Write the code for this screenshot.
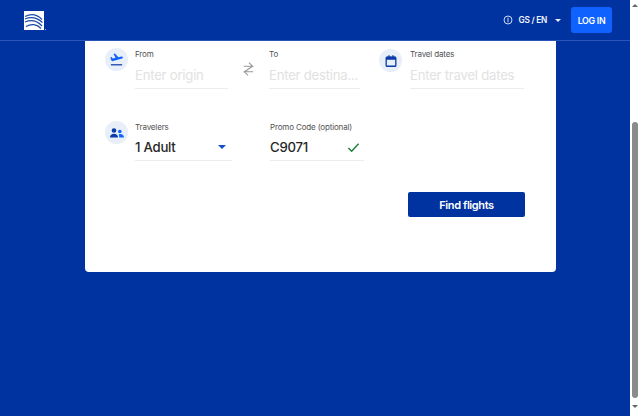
<div class="page">
  <div class="main">
    <header class="top">
      <svg class="logo" viewBox="0 0 20 19" width="20" height="19" aria-hidden="true">
        <rect width="20" height="19" fill="#fff" />
        <path d="M1 5.500C7 2.500 13 3.500 18 8.500M1 8C7 5.500 13 6.500 18.500 11.500M1 11C7 8.500 13 9.500 18 15M2 15.500C7 12.500 13 13 17 17.500" fill="none" stroke="#1a4aa8" stroke-width="1.200" />
      </svg>
      <span class="tm"></span>
      <div class="spacer"></div>
      <svg class="coin" viewBox="0 0 12 12" width="10" height="10" aria-hidden="true">
        <circle cx="6" cy="6" r="4.800" fill="none" stroke="#dfe7f8" stroke-width="1.100" />
        <path d="M6 3.200v5.600" stroke="#dfe7f8" stroke-width="1.100" />
      </svg>
      <span class="locale">GS / EN</span>
      <span class="caret white"></span>
      <button class="login">LOG IN</button>
    </header>
    <div class="content">
      <section class="card">
        <div class="row first">
          <div class="badge">
            <svg viewBox="0 0 16 16" width="15" height="15" aria-hidden="true">
              <path d="M2 13h12v1.300H2z" fill="#0a3ba8" />
              <path d="M2.200 8.500 1.500 5.600l1.200-.3 1.300 1.600 3-.8L4.800 2l1.500-.4 3.700 4.100 3.300-.9c.7-.2 1.300.2 1.500.8.100.6-.2 1.200-.8 1.400L3.400 9.800z" fill="#0f62fe" />
            </svg>
          </div>
          <div class="field from">
            <span class="label">From</span>
            <span class="value placeholder">Enter origin</span>
          </div>
          <div class="swap">
            <svg viewBox="0 0 12 16" width="11" height="16" aria-hidden="true">
              <path d="M1 5H10.500L6.500 1M10.500 5 1.500 11H11M1.500 11l4 4" fill="none" stroke="#969696" stroke-width="1.100" />
            </svg>
          </div>
          <div class="field to">
            <span class="label">To</span>
            <span class="value placeholder">Enter destina...</span>
          </div>
          <div class="badge dates">
            <svg viewBox="0 0 16 16" width="14" height="14" aria-hidden="true">
              <rect x="2.500" y="3.500" width="11" height="10.500" rx="1" fill="none" stroke="#0a3ba8" stroke-width="1.500" />
              <path d="M2.500 3h11v3.500h-11zM5 1.500h1.500V4H5zM9.500 1.500H11V4H9.500z" fill="#0a3ba8" />
            </svg>
          </div>
          <div class="field when">
            <span class="label">Travel dates</span>
            <span class="value placeholder">Enter travel dates</span>
          </div>
        </div>
        <div class="row second">
          <div class="badge">
            <svg viewBox="0 0 16 16" width="16" height="16" aria-hidden="true">
              <circle cx="5" cy="5.500" r="2.300" fill="#0a3ba8" />
              <circle cx="10.800" cy="6.500" r="1.800" fill="#0f62fe" />
              <path d="M1 12.500c0-2.500 1.800-3.700 4-3.700s4 1.200 4 3.700z" fill="#0a3ba8" />
              <path d="M9.800 9.200c2.700-.6 5.200.6 5.200 3.300h-4.800c0-1.300 0-2.300-.4-3.300z" fill="#0f62fe" />
            </svg>
          </div>
          <div class="field travelers">
            <span class="label">Travelers</span>
            <span class="value filled">1 Adult<span class="caret blue"></span></span>
          </div>
          <div class="field promo">
            <span class="label">Promo Code (optional)</span>
            <span class="value filled">C9071
              <svg viewBox="0 0 14 14" width="13" height="13" aria-hidden="true">
                <path d="M1.500 7.500 5 11l7.500-8" fill="none" stroke="#1a7f37" stroke-width="1.500" />
              </svg>
            </span>
          </div>
        </div>
        <div class="actions">
          <button class="find">Find flights</button>
        </div>
      </section>
    </div>
  </div>
  <aside class="scrollbar">
    <span class="arrow up"></span>
    <span class="thumb"></span>
    <span class="arrow down"></span>
  </aside>
</div>

<style>
  :global(body) { margin: 0; background: #0033a0; }
  .page { display: flex; width: 640px; height: 416px; overflow: hidden; font-family: Inter, "Liberation Sans", sans-serif; }
  .main { width: 630px; background: #0033a0; flex: none; }
  .top { height: 40px; display: flex; align-items: center; padding: 0 18px 0 24px; border-bottom: 1px solid #2a55b8; }
  .logo { margin-top: 1px; }
  .tm { width: 1px; height: 1px; background: #9db4e6; align-self: center; margin: 19px 0 0 1px; }
  .spacer { flex: 1; }
  .coin { margin-right: 5px; }
  .locale { color: #f2f5fc; font-size: 8.300px; font-weight: 600; letter-spacing: -0.25px; white-space: nowrap; }
  .caret { width: 0; height: 0; border-left: 3px solid transparent; border-right: 3px solid transparent; border-top: 3px solid #fff; }
  .caret.white { margin: 0 10px 0 8px; border-top-color: #e8eefb; }
  .login { width: 41px; height: 26px; padding: 0; border: 0; border-radius: 3px; background: #0f62fe; color: #fff; font: 600 8.800px Inter, sans-serif; letter-spacing: -0.3px; }
  .content { padding-left: 85px; }
  .card { width: 471px; height: 231px; box-sizing: border-box; background: #fff; border-radius: 0 0 4px 4px; padding: 6px 31px 0 20px; }
  .row { display: flex; align-items: flex-start; }
  .row.second { margin-top: 31px; }
  .badge { width: 23px; height: 23px; border-radius: 50%; background: #e8eff8; display: flex; align-items: center; justify-content: center; flex: none; margin-top: 1px; }
  .field { display: flex; flex-direction: column; }
  .label { font-size: 8px; letter-spacing: -0.15px; line-height: 14px; color: #525252; white-space: nowrap; }
  .value { height: 28px; display: flex; align-items: center; justify-content: space-between; border-bottom: 1px solid #ececec; box-sizing: border-box; font-size: 13.200px; letter-spacing: -0.25px; white-space: nowrap; }
  .placeholder { color: #e2e2e2; }
  .filled { color: #262626; font-weight: 500; height: 27px; }
  .from { margin-left: 7px; width: 93px; }
  .swap { width: 41px; display: flex; justify-content: center; padding-top: 14px; }
  .to { width: 91px; }
  .dates { margin: 2px 0 0 19px; }
  .when { margin-left: 8px; width: 114px; }
  .travelers { margin-left: 7px; width: 97px; }
  .travelers .value { padding-right: 6px; }
  .caret.blue { border-left-width: 4px; border-right-width: 4px; border-top: 4px solid #0f4fd0; }
  .promo { margin-left: 38px; width: 94px; }
  .promo .value { padding-right: 4px; }
  .actions { display: flex; justify-content: flex-end; margin-top: 31px; }
  .find { width: 117px; height: 25px; padding: 0; border: 0; border-radius: 2px; background: #0033a0; color: #fff; font: 600 11px Inter, sans-serif; letter-spacing: -0.4px; }
  .scrollbar { width: 10px; background: #fff; display: flex; flex-direction: column; align-items: center; flex: none; }
  .arrow { width: 0; height: 0; border-left: 3px solid transparent; border-right: 3px solid transparent; }
  .arrow.up { border-bottom: 3px solid #666; margin-top: 4px; }
  .arrow.down { border-top: 3px solid #666; margin-top: 7px; }
  .thumb { width: 6px; height: 276px; border-radius: 3px; background: #8b8b8b; margin-top: 115px; }
</style>
